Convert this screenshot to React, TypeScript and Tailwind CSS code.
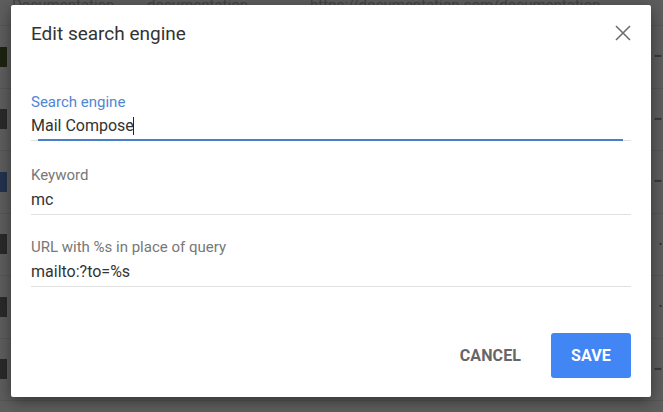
import React from "react";

const rows = [
  { mark: "bg-[#1c2410]", dots: true },
  { mark: "bg-[#2a2a2a]", dots: true },
  { mark: "bg-[#23324f]", dots: true },
  { mark: "bg-[#2a2a2a]", dots: false },
  { mark: "bg-[#2a2a2a]", dots: false },
  { mark: "bg-[#2a2a2a]", dots: true },
];

export default function App() {
  return (
    <div
      className="relative w-[663px] h-[412px] overflow-hidden bg-[#5e5e5e]"
      style={{ fontFamily: "Roboto, 'Liberation Sans', sans-serif" }}
    >
      {/* background page (dimmed) */}
      <div className="flex flex-col -mt-[14px]">
        <div className="h-[40px] flex items-center border-b border-[#575757] text-[15px] text-[#454545] whitespace-nowrap">
          <span className="pl-[12px] w-[147px]">Documentation</span>
          <span className="w-[163px]">documentation</span>
          <span>https://documentation.com/documentation</span>
        </div>
        {rows.map((r, i) => (
          <div
            key={i}
            className="h-[62.5px] flex items-center justify-between border-b border-[#575757]"
          >
            <div className={`w-[7px] h-[20px] ${r.mark}`} />
            <div className="pr-[2px] text-[10px] text-[#333] tracking-[-1px]">
              {r.dots ? "•••" : "•"}
            </div>
          </div>
        ))}
      </div>

      {/* dialog */}
      <div className="absolute left-[11px] top-[5px] w-[640px] h-[392px] bg-white rounded-[2px] shadow-[0_4px_16px_rgba(0,0,0,0.45)] flex flex-col">
        <div className="flex items-start justify-between pl-[20px] pr-[20px] pt-[18px]">
          <h1 className="text-[19px] leading-[21px] text-[#333] font-normal">
            Edit search engine
          </h1>
          <svg
            width="16"
            height="16"
            viewBox="0 0 16 16"
            className="mt-[2px]"
            fill="none"
            stroke="#6f6f6f"
            strokeWidth="1.6"
          >
            <path d="M1 1 L15 15 M15 1 L1 15" />
          </svg>
        </div>

        <div className="flex flex-col px-[20px] mt-[50px]">
          <div className="flex flex-col">
            <label className="text-[15px] leading-[16px] text-[#4f86d4]">
              Search engine
            </label>
            <div className="mt-[7px] text-[16px] leading-[18px] text-[#333] flex items-center">
              <span>Mail Compose</span>
              <span className="w-px h-[18px] bg-[#222] ml-[-1px]" />
            </div>
            <div className="mt-[4px] relative h-[2px]">
              <div className="absolute left-0 right-0 top-[1px] h-px bg-[#e0e0e0]" />
              <div className="absolute left-[7px] right-[8px] top-0 h-[2px] bg-[#4a7fc9]" />
            </div>
          </div>

          <div className="flex flex-col mt-[26px]">
            <label className="text-[15px] leading-[16px] text-[#777]">Keyword</label>
            <div className="mt-[8px] text-[16px] leading-[18px] text-[#333]">mc</div>
            <div className="mt-[5px] h-px bg-[#e0e0e0]" />
          </div>

          <div className="flex flex-col mt-[24px]">
            <label className="text-[15px] leading-[16px] text-[#777]">
              URL with %s in place of query
            </label>
            <div className="mt-[8px] text-[16px] leading-[18px] text-[#333]">
              mailto:?to=%s
            </div>
            <div className="mt-[5px] h-px bg-[#e0e0e0]" />
          </div>
        </div>

        <div className="flex justify-end items-center gap-[19px] px-[20px] mt-[46px]">
          <button className="h-[45px] px-[11px] text-[16px] font-bold text-[#666] tracking-[0.1px]">
            CANCEL
          </button>
          <button className="w-[80px] h-[45px] rounded-[3px] bg-[#4285f4] text-white text-[16px] font-bold tracking-[0.1px]">
            SAVE
          </button>
        </div>
      </div>
    </div>
  );
}
